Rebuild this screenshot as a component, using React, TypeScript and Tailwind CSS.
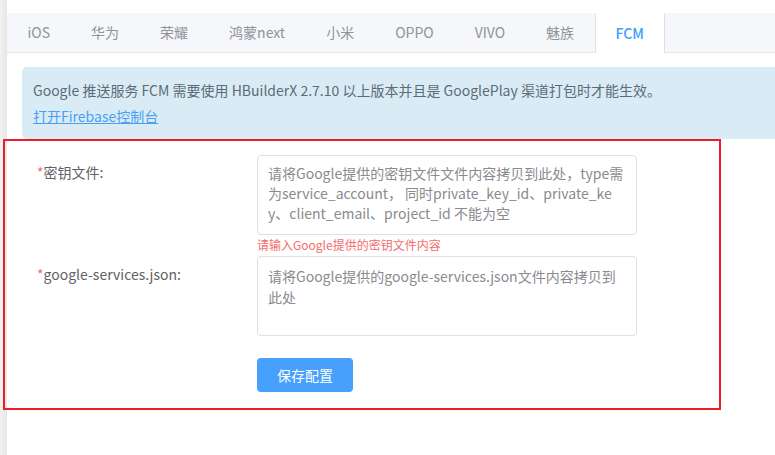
const TABS = ["iOS", "华为", "荣耀", "鸿蒙next", "小米", "OPPO", "VIVO", "魅族", "FCM"];
const ACTIVE = "FCM";

export default function App() {
  return (
    <div
      className="relative flex h-[455px] w-[775px] overflow-hidden bg-white text-[#606266]"
      style={{ fontFamily: '"Noto Sans CJK SC", "Noto Sans", sans-serif' }}
    >
      <div className="w-[7px] shrink-0 bg-gradient-to-r from-[#f2f2f2] to-[#e6e6e6]" />

      <div className="flex-1">
        <div className="mt-[13px] flex h-[40px] border-b border-[#e4e7ed] bg-[#f5f7fa]">
          {TABS.map((t) =>
            t === ACTIVE ? (
              <div
                key={t}
                className="-mb-px flex h-[40px] w-[70px] items-center justify-center border-x border-[#dcdfe6] bg-white text-[14px] font-medium text-[#409eff]"
              >
                {t}
              </div>
            ) : (
              <div
                key={t}
                className="flex h-[39px] items-center px-[20.5px] text-[14px] text-[#909399]"
              >
                {t}
              </div>
            )
          )}
        </div>

        <div className="ml-[15px] mt-[14px] h-[72px] rounded-l-[5px] bg-[#d9ecf5] px-[11px] pt-[10px] text-[14px] leading-[26px] text-[#5d6b78]">
          <p>Google 推送服务 FCM 需要使用 HBuilderX 2.7.10 以上版本并且是 GooglePlay 渠道打包时才能生效。</p>
          <a className="text-[#4a9ff5] underline">打开Firebase控制台</a>
        </div>

        <div className="mt-[16px] flex flex-col">
          <div className="flex">
            <label className="w-[250px] shrink-0 pl-[30px] pt-[5px] text-[14px] leading-[24px] text-[#606266]">
              <span className="text-[#f56c6c]">*</span>密钥文件:
            </label>
            <div className="flex flex-col">
              <div className="h-[80px] w-[380px] break-all rounded-[4px] border border-[#dcdfe6] px-[10px] pt-[7px] text-[14px] leading-[20px] text-[#8a8a8f]">
                请将Google提供的密钥文件文件内容拷贝到此处，type需为service_account， 同时private_key_id、private_key、client_email、project_id 不能为空
              </div>
              <div className="h-[22px] pt-[2px] text-[12px] leading-[16px] text-[#f56c6c]">
                请输入Google提供的密钥文件内容
              </div>
            </div>
          </div>

          <div className="flex">
            <label className="w-[250px] shrink-0 pl-[30px] pt-[5px] text-[14px] leading-[24px] text-[#606266]">
              <span className="text-[#f56c6c]">*</span>google-services.json:
            </label>
            <div className="-mt-px h-[80px] w-[380px] rounded-[4px] border border-[#dcdfe6] px-[10px] pt-[9px] text-[14px] leading-[21px] text-[#8a8a8f]">
              请将Google提供的google-services.json文件内容拷贝到此处
            </div>
          </div>

          <div className="ml-[250px] mt-[22px]">
            <button className="h-[34px] w-[96px] rounded-[4px] bg-[#46a0fc] text-[14px] text-white">
              保存配置
            </button>
          </div>
        </div>
      </div>

      <div className="pointer-events-none absolute left-[3px] top-[139px] h-[271px] w-[718px] border-2 border-[#ee1c25]" />
    </div>
  );
}
